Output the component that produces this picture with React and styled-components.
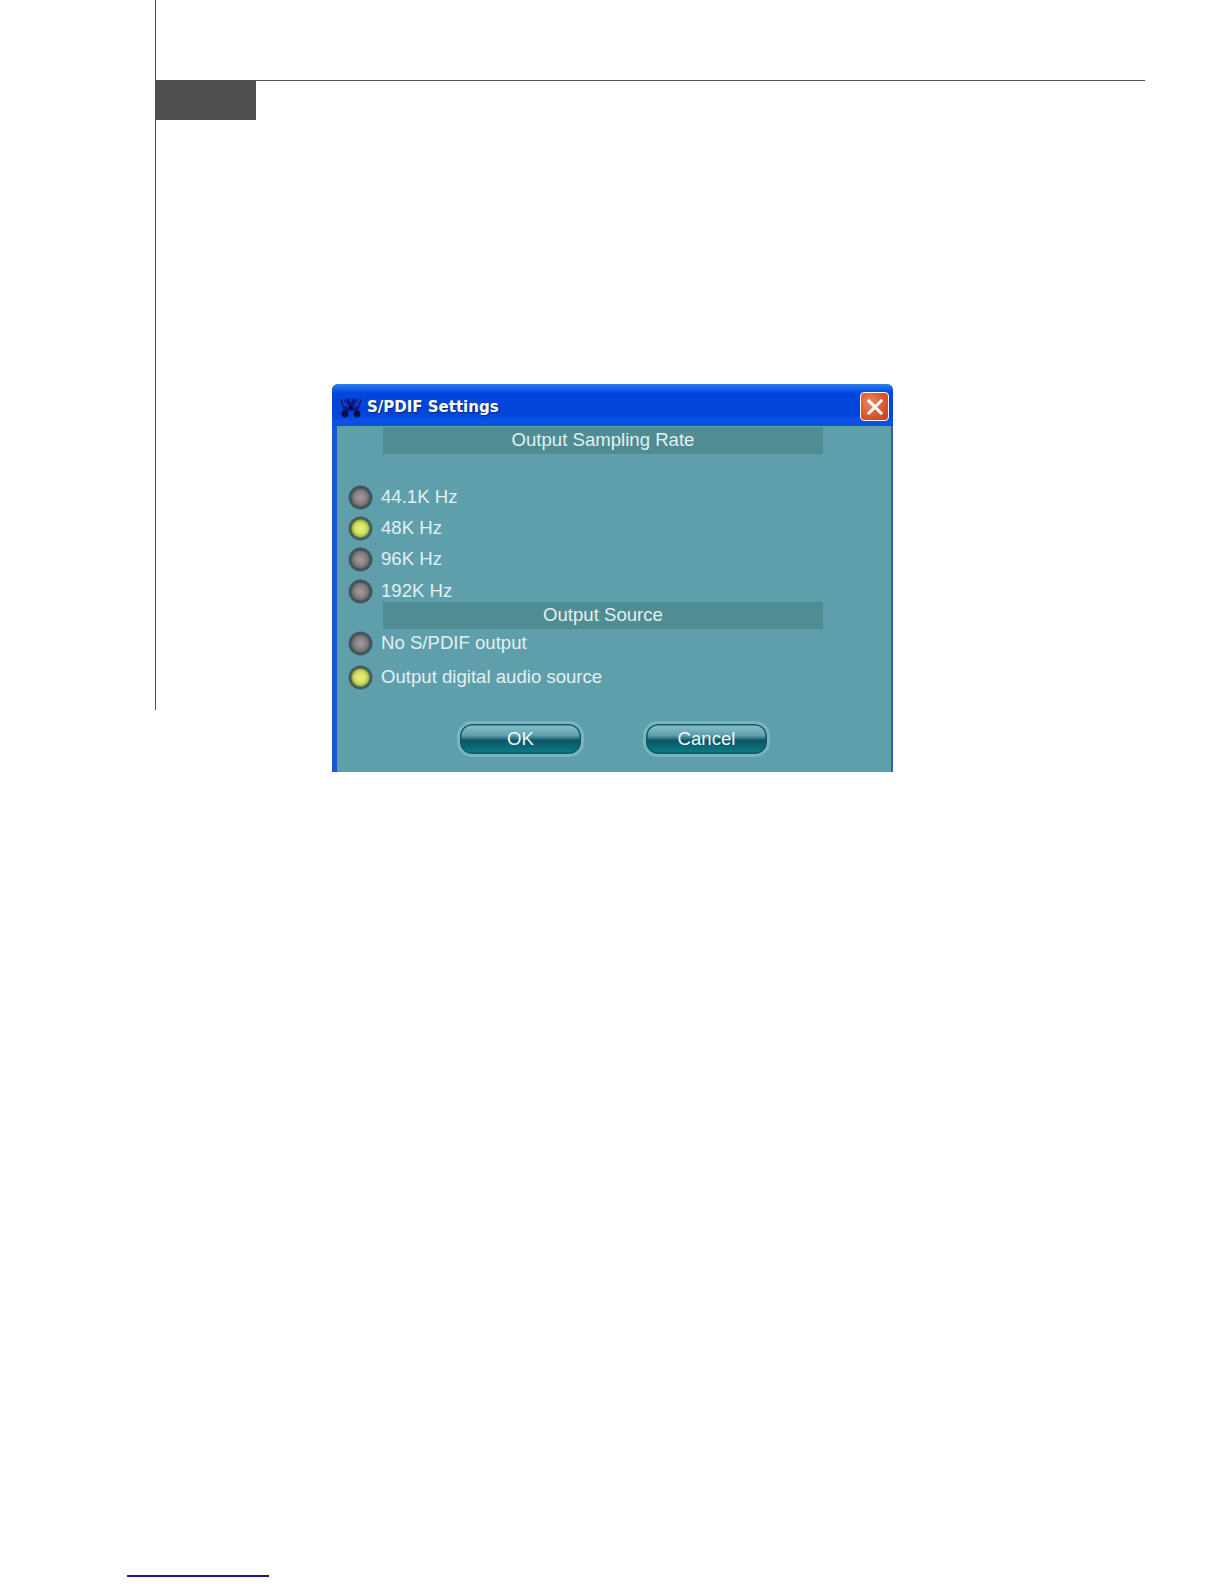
import React from "react";
import styled, { createGlobalStyle } from "styled-components";

const GlobalStyle = createGlobalStyle`
  html, body {
    margin: 0;
    padding: 0;
    background: #fff;
  }
  body {
    font-family: "Liberation Sans", Arial, sans-serif;
  }
`;

const sampleRates = [
  { label: "44.1K Hz", gap: 0 },
  { label: "48K Hz", gap: 11, on: true },
  { label: "96K Hz", gap: 11 },
  { label: "192K Hz", gap: 12 },
];

const App = () => {
  return (
    <Page>
      <GlobalStyle />
      <Sheet>
        <Tab />
        <Dialog>
          <TitleBar>
            <AppIcon viewBox="0 0 24 22">
              <path
                d="M3 3l4 12M21 3l-4 12M8 3l4 8 4-8M7 15l5-4 5 4"
                stroke="#0d1a86"
                strokeWidth="4"
                fill="none"
              />
              <circle cx="6" cy="18" r="3.4" fill="#070c48" />
              <circle cx="18" cy="18" r="3.4" fill="#070c48" />
              <circle cx="12" cy="12" r="2.2" fill="#070c48" />
              <path d="M3 2l3 8M21 2l-3 8" stroke="#2440e0" strokeWidth="1.6" fill="none" />
            </AppIcon>
            <Title>S/PDIF Settings</Title>
            <CloseButton>
              <svg viewBox="0 0 20 20" width="20" height="20">
                <path
                  d="M4 4l12 12M16 4L4 16"
                  stroke="#fff"
                  strokeWidth="3"
                  strokeLinecap="square"
                />
              </svg>
            </CloseButton>
          </TitleBar>
          <Body>
            <Band>Output Sampling Rate</Band>
            <RateList>
              {sampleRates.map((rate) => (
                <Row key={rate.label} $gap={rate.gap}>
                  <Radio $on={rate.on} />
                  <RowLabel>{rate.label}</RowLabel>
                </Row>
              ))}
            </RateList>
            <Band>Output Source</Band>
            <Row $gap={4}>
              <Radio />
              <RowLabel>No S/PDIF output</RowLabel>
            </Row>
            <Row $gap={14}>
              <Radio $on />
              <RowLabel>Output digital audio source</RowLabel>
            </Row>
            <Buttons>
              <Button>OK</Button>
              <Button>Cancel</Button>
            </Buttons>
          </Body>
        </Dialog>
      </Sheet>
      <FooterLink />
    </Page>
  );
};

const Page = styled.div`
  width: 1224px;
  height: 1584px;
  overflow: hidden;
  background: #fff;
`;

const Sheet = styled.div`
  margin-left: 155px;
  width: 990px;
  height: 710px;
  padding-top: 80px;
  box-sizing: border-box;
  border-left: 1px solid #4a4a4a;
`;

const Tab = styled.div`
  width: 100px;
  height: 40px;
  background: #52504e;
  position: relative;
  &::after {
    content: "";
    position: absolute;
    top: 0;
    left: 100px;
    width: 889px;
    height: 1px;
    background: #555;
  }
`;

const Dialog = styled.div`
  margin: 264px 0 0 176px;
  width: 561px;
  height: 388px;
  display: flex;
  flex-direction: column;
  background: #5f9fac;
  border-radius: 6px 6px 0 0;
  overflow: hidden;
`;

const TitleBar = styled.div`
  height: 42px;
  box-sizing: border-box;
  flex: none;
  display: flex;
  align-items: center;
  padding: 3px 4px 0 7px;
  background: linear-gradient(
    180deg,
    #2e7ff0 0,
    #1a63ee 10%,
    #0247dc 22%,
    #0044d8 70%,
    #0a52e6 90%,
    #0a50d8 100%
  );
`;

const AppIcon = styled.svg`
  width: 24px;
  height: 22px;
  flex: none;
`;

const Title = styled.span`
  margin-left: 4px;
  flex: 1;
  font-family: "DejaVu Sans", Verdana, sans-serif;
  font-weight: 700;
  font-size: 15px;
  color: #fff;
  text-shadow: 1px 1px 1px #0a2a80;
`;

const CloseButton = styled.div`
  width: 29px;
  height: 29px;
  box-sizing: border-box;
  display: flex;
  align-items: center;
  justify-content: center;
  border: 1px solid #fff;
  border-radius: 4px;
  background: radial-gradient(circle at 35% 35%, #e88a68 0, #d8582f 55%, #c23f1c 100%);
`;

const Body = styled.div`
  flex: 1;
  padding: 1px 2px 0 5px;
  position: relative;
  &::before {
    content: "";
    position: absolute;
    left: 0;
    top: 0;
    bottom: 0;
    width: 5px;
    background: #1a56d0;
  }
  &::after {
    content: "";
    position: absolute;
    right: 0;
    top: 0;
    bottom: 0;
    width: 2px;
    background: #2a62b8;
  }
`;

const Band = styled.div`
  margin-left: 46px;
  width: 440px;
  height: 27px;
  line-height: 26px;
  text-align: center;
  background: #4f8c93;
  font-size: 18.6px;
  color: #e2f0f2;
`;

const RateList = styled.div`
  padding: 33px 0 1px;
`;

const Row = styled.div`
  margin-top: ${(p) => p.$gap}px;
  height: 20px;
  display: flex;
  align-items: center;
  padding-left: 11px;
`;

const Radio = styled.span`
  flex: none;
  width: 25px;
  height: 25px;
  margin: -3px 0;
  border-radius: 50%;
  background: ${(p) =>
    p.$on
      ? "radial-gradient(circle closest-side at 50% 50%, #e6f27c 0, #d6e662 40%, #b4c454 62%, #46604c 78%, #3e5e58 90%, #5f9aa4 100%)"
      : "radial-gradient(circle closest-side at 50% 50%, #a39c9e 0, #8c8587 40%, #777274 62%, #42525a 78%, #3c5860 90%, #5f9aa4 100%)"};
`;

const RowLabel = styled.span`
  margin-left: 8px;
  font-size: 18.6px;
  color: #e2f0f2;
  white-space: nowrap;
`;

const Buttons = styled.div`
  margin: 34px 0 0 120px;
  display: flex;
  gap: 59px;
`;

const Button = styled.div`
  width: 127px;
  height: 36px;
  box-sizing: border-box;
  border: 3px solid #79b4bf;
  border-radius: 15px;
  display: flex;
  align-items: center;
  justify-content: center;
  font-size: 18.6px;
  color: #eef8f8;
  box-shadow: inset 0 0 0 1.5px #0f5a68;
  background: linear-gradient(
    180deg,
    #8cc4ce 0,
    #5f9fae 38%,
    #0d5566 55%,
    #0a6672 72%,
    #0b8088 100%
  );
`;

const FooterLink = styled.div`
  margin: 865px 0 0 127px;
  width: 142px;
  height: 2px;
  background: #1a1a8c;
`;

export default App;
